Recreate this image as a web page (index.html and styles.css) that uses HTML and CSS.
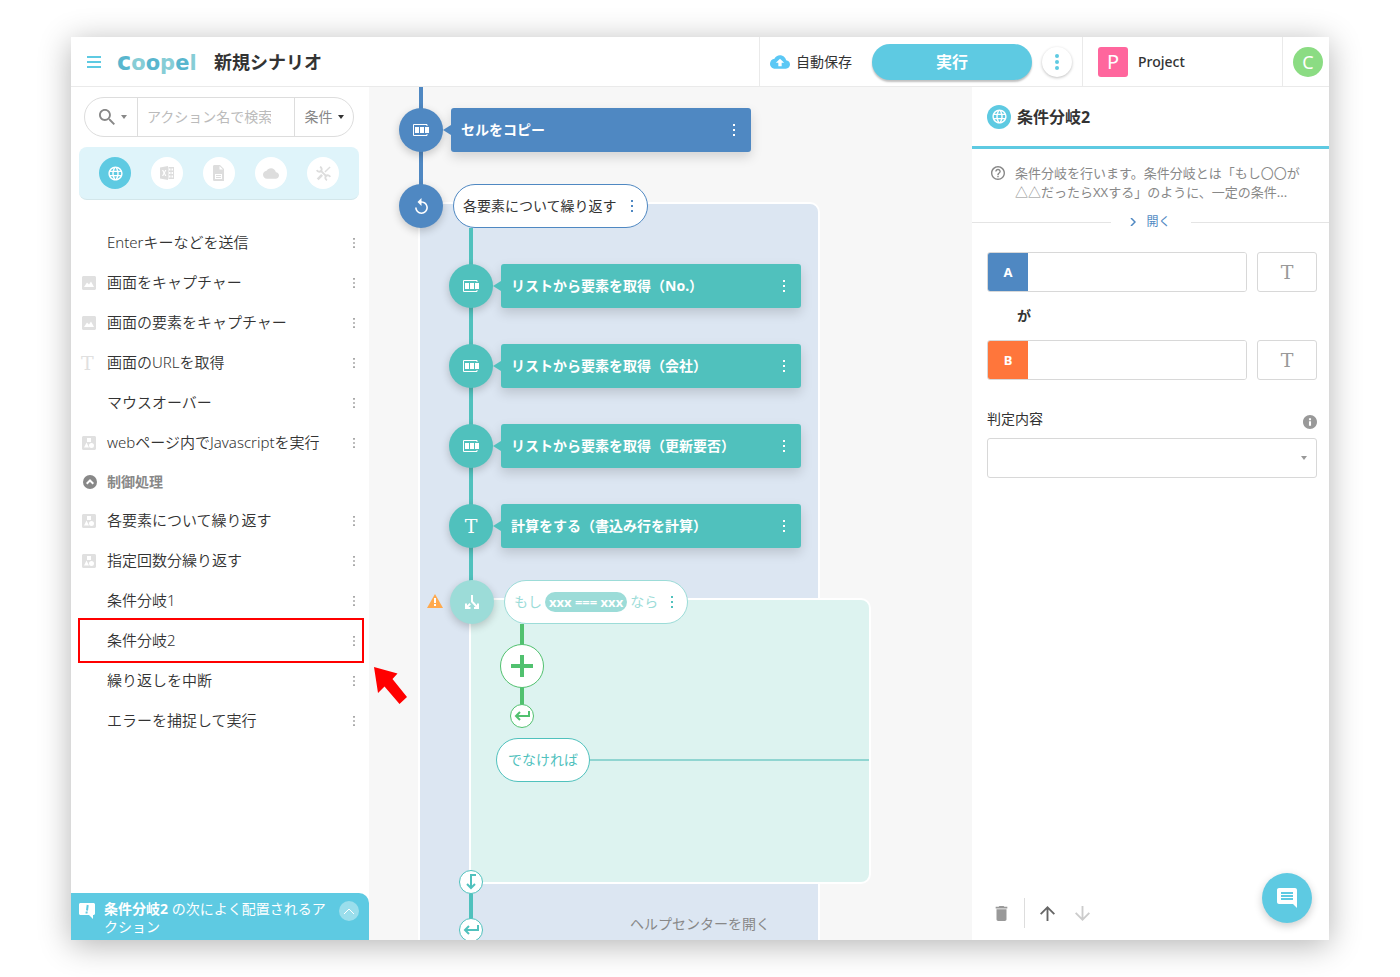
FILE: index.html
```html
<!DOCTYPE html>
<html lang="ja">
<head>
<meta charset="utf-8">
<meta name="viewport" content="width=device-width, initial-scale=1">
<title>新規シナリオ - coopel</title>
<link rel="stylesheet" href="styles.css">
</head>
<body>
<svg class="sprite" aria-hidden="true">
  <symbol id="globe" viewBox="0 0 24 24"><path d="M11.99 2C6.47 2 2 6.48 2 12s4.47 10 9.99 10C17.52 22 22 17.52 22 12S17.52 2 11.99 2zm6.93 6h-2.95c-.32-1.25-.78-2.45-1.38-3.56 1.84.63 3.37 1.91 4.33 3.56zM12 4.04c.83 1.2 1.48 2.53 1.91 3.96h-3.82c.43-1.43 1.08-2.76 1.91-3.96zM4.26 14C4.1 13.36 4 12.69 4 12s.1-1.36.26-2h3.38c-.08.66-.14 1.32-.14 2 0 .68.06 1.34.14 2H4.26zm.82 2h2.95c.32 1.25.78 2.45 1.38 3.56-1.84-.63-3.37-1.9-4.33-3.56zm2.95-8H5.08c.96-1.66 2.49-2.93 4.33-3.56C8.81 5.55 8.35 6.75 8.03 8zM12 19.96c-.83-1.2-1.48-2.53-1.91-3.96h3.82c-.43 1.43-1.08 2.76-1.91 3.96zM14.34 14H9.66c-.09-.66-.16-1.32-.16-2 0-.68.07-1.35.16-2h4.68c.09.65.16 1.32.16 2 0 .68-.07 1.34-.16 2zm.25 5.56c.6-1.11 1.06-2.31 1.38-3.56h2.95c-.96 1.65-2.49 2.93-4.33 3.56zM16.36 14c.08-.66.14-1.32.14-2 0-.68-.06-1.34-.14-2h3.38c.16.64.26 1.31.26 2s-.1 1.36-.26 2h-3.38z"/></symbol>
  <symbol id="search" viewBox="3 3 17.5 17.5"><path d="M15.5 14h-.79l-.28-.27C15.41 12.59 16 11.11 16 9.5 16 5.91 13.09 3 9.5 3S3 5.91 3 9.5 5.91 16 9.5 16c1.61 0 3.09-.59 4.23-1.57l.27.28v.79l5 4.99L20.49 19l-4.99-5zm-6 0C7.01 14 5 11.99 5 9.5S7.01 5 9.5 5 14 7.01 14 9.5 11.99 14 9.5 14z"/></symbol>
  <symbol id="excel" viewBox="0 0 16 16"><path fill-rule="evenodd" d="M1 2.500L9 1v14L1 13.500zM3 5l1.500 3L3 11h1.300L5.200 9l.9 2h1.300L5.900 8l1.500-3H6.100l-.9 2-.9-2z"/><path fill-rule="evenodd" d="M9.500 2H15v12H9.500zM10 3.500v2h1.500v-2zm2.500 0v2H14v-2zM10 7v2h1.500V7zm2.500 0v2H14V7zM10 10.500v2h1.500v-2zm2.500 0v2H14v-2z"/></symbol>
  <symbol id="file" viewBox="0 0 12 16"><path fill-rule="evenodd" d="M1.500 0H7l4 4v12H1.500C.7 16 0 15.500 0 14.500v-13C0 .700.500 0 1.500 0zM6.500 1v3.500H10zM2 9v5h7V9zM3 10h5v1H3zm0 2h5v1H3z"/></symbol>
  <symbol id="cloud" viewBox="0 4 24 16"><path d="M19.350 10.040C18.670 6.590 15.640 4 12 4 9.110 4 6.600 5.640 5.350 8.040 2.340 8.360 0 10.910 0 14c0 3.310 2.690 6 6 6h13c2.760 0 5-2.240 5-5 0-2.640-2.050-4.780-4.650-4.960z"/></symbol>
  <symbol id="tools" viewBox="0 0 16 16"><g fill="none" stroke="currentColor"><path stroke-width="2" d="M5 5l6.500 6.500M4.200 1A2.600 2.600 0 1 1 1 4.200M11.800 15A2.600 2.600 0 1 1 15 11.800"/><path stroke-width="1.500" d="M15 1L9.500 6.500"/><path stroke-width="2.800" d="M6.500 9.500L1.800 14.200"/></g></symbol>
  <symbol id="picture" viewBox="0 0 14 14"><path fill-rule="evenodd" d="M1.500 0h11C13.300 0 14 .700 14 1.500v11c0 .8-.7 1.500-1.500 1.500h-11C.7 14 0 13.300 0 12.500v-11C0 .700.700 0 1.500 0zM2 11h10L9 5.500l-2 3-2-2z"/></symbol>
  <symbol id="shapes" viewBox="0 0 14 14"><path fill-rule="evenodd" d="M1.500 0h11C13.300 0 14 .700 14 1.500v11c0 .8-.7 1.500-1.500 1.500h-11C.7 14 0 13.300 0 12.500v-11C0 .700.700 0 1.500 0zM5 2v4h4V2zM4.500 6.500L2 11.500h5zM9.500 7a2.500 2.500 0 100 5 2.500 2.500 0 000-5z"/></symbol>
  <symbol id="collapse" viewBox="0 0 14 14"><circle cx="7" cy="7" r="7"/><path fill="none" stroke="#fff" stroke-width="2" d="M3.700 8.700L7 5.500l3.300 3.200"/></symbol>
  <symbol id="dots" viewBox="0 0 2 12"><path d="M0 0h2v2H0zM0 5h2v2H0zM0 10h2v2H0z"/></symbol>
  <symbol id="caret" viewBox="0 0 6 4"><path d="M0 0h6L3 4z"/></symbol>
  <symbol id="cells" viewBox="0 0 16 12"><path fill="none" stroke="currentColor" d="M14 2V.5H.5v11H14V10"/><path d="M2 3h4v6H2zM7 3h4v6H7zM12 3h4v6h-4z"/></symbol>
  <symbol id="replay" viewBox="4 1 16 20"><path d="M12 5V1L7 6l5 5V7c3.310 0 6 2.690 6 6s-2.690 6-6 6-6-2.690-6-6H4c0 4.420 3.580 8 8 8s8-3.580 8-8-3.580-8-8-8z"/></symbol>
  <symbol id="branch" viewBox="0 0 14 14"><path fill="none" stroke="currentColor" stroke-width="2" d="M7 0v6.500l5 5.500M5.200 8.800L2 12M1 8.500V13h4.500M9 13h4V8.500"/></symbol>
  <symbol id="return" viewBox="0 0 16 10"><path fill="none" stroke="currentColor" stroke-width="2" d="M15 0v5H2M6 1L2 5l4 4"/></symbol>
  <symbol id="down" viewBox="0 0 10 16"><path fill="none" stroke="currentColor" stroke-width="2" d="M10 1H5v13M1 10l4 4 4-4"/></symbol>
  <symbol id="help" viewBox="2 2 20 20"><path d="M11 18h2v-2h-2v2zm1-16C6.480 2 2 6.480 2 12s4.480 10 10 10 10-4.480 10-10S17.520 2 12 2zm0 18c-4.410 0-8-3.590-8-8s3.590-8 8-8 8 3.590 8 8-3.590 8-8 8zm0-14c-2.210 0-4 1.790-4 4h2c0-1.100.9-2 2-2s2 .9 2 2c0 2-3 1.750-3 5h2c0-2.250 3-2.500 3-5 0-2.210-1.790-4-4-4z"/></symbol>
  <symbol id="info" viewBox="2 2 20 20"><path fill-rule="evenodd" d="M12 2C6.480 2 2 6.480 2 12s4.480 10 10 10 10-4.480 10-10S17.520 2 12 2zm1.500 15.500h-3V11h3v6.500zm0-8h-3v-3h3v3z"/></symbol>
  <symbol id="trash" viewBox="5 3 14 18"><path d="M6 19c0 1.100.9 2 2 2h8c1.100 0 2-.9 2-2V7H6v12zM19 4h-3.500l-1-1h-5l-1 1H5v2h14V4z"/></symbol>
  <symbol id="up" viewBox="4 4 16 16"><path d="M4 12l1.410 1.410L11 7.830V20h2V7.830l5.580 5.590L20 12l-8-8-8 8z"/></symbol>
  <symbol id="comment" viewBox="2 2 20 20"><path d="M21.990 4c0-1.100-.89-2-1.990-2H4c-1.100 0-2 .9-2 2v12c0 1.100.9 2 2 2h14l4 4-.01-18zM18 14H6v-2h12v2zm0-3H6V9h12v2zm0-3H6V6h12v2z"/></symbol>
</svg>

<div class="app">
  <header class="topbar">
    <button class="menu" aria-label="メニュー"><svg viewBox="0 0 14 12"><path d="M0 0h14v2H0zM0 5h14v2H0zM0 10h14v2H0z"/></svg></button>
    <a class="logo" href="#" aria-label="coopel"><span class="initial">c</span><span class="pale raised">o</span><span>o</span><span class="pale">p</span><span>e</span><span class="pale">l</span></a>
    <h1 class="title">新規シナリオ</h1>
    <div class="run-area">
      <span class="saved"><svg viewBox="0 4 24 16"><path fill-rule="evenodd" d="M19.350 10.040C18.670 6.590 15.640 4 12 4 9.110 4 6.600 5.640 5.350 8.040 2.340 8.360 0 10.910 0 14c0 3.310 2.690 6 6 6h13c2.760 0 5-2.240 5-5 0-2.640-2.050-4.780-4.650-4.960zM14 13v4h-4v-4H7l5-5 5 5h-3z"/></svg>自動保存</span>
      <button class="run">実行</button>
      <button class="more" aria-label="その他"><svg viewBox="0 0 4 16"><circle cx="2" cy="2" r="2"/><circle cx="2" cy="8" r="2"/><circle cx="2" cy="14" r="2"/></svg></button>
    </div>
    <a class="project" href="#"><span class="project-mark">P</span>Project</a>
    <div class="account"><button class="avatar">C</button></div>
  </header>

  <div class="body">
    <aside class="sidebar">
      <div class="search">
        <button class="search-kind" aria-label="検索の種類"><svg class="ic-search"><use href="#search"/></svg><svg class="ic-caret"><use href="#caret"/></svg></button>
        <input class="search-text" type="search" placeholder="アクション名で検索" aria-label="アクション名で検索">
        <button class="search-filter">条件<svg class="ic-caret"><use href="#caret"/></svg></button>
      </div>
      <nav class="kinds" aria-label="カテゴリ">
        <button class="kind active" aria-label="ブラウザ"><svg class="ic-globe"><use href="#globe"/></svg></button>
        <button class="kind" aria-label="Excel"><svg class="ic16"><use href="#excel"/></svg></button>
        <button class="kind" aria-label="ファイル"><svg class="ic-file"><use href="#file"/></svg></button>
        <button class="kind" aria-label="クラウド"><svg class="ic-cloud"><use href="#cloud"/></svg></button>
        <button class="kind" aria-label="ツール"><svg class="ic-tools"><use href="#tools"/></svg></button>
      </nav>
      <ul class="actions">
        <li class="action"><span class="type"></span><span class="name">Enterキーなどを送信</span><button class="dots" aria-label="メニュー"><svg><use href="#dots"/></svg></button></li>
        <li class="action"><span class="type"><svg><use href="#picture"/></svg></span><span class="name">画面をキャプチャー</span><button class="dots" aria-label="メニュー"><svg><use href="#dots"/></svg></button></li>
        <li class="action"><span class="type"><svg><use href="#picture"/></svg></span><span class="name">画面の要素をキャプチャー</span><button class="dots" aria-label="メニュー"><svg><use href="#dots"/></svg></button></li>
        <li class="action"><span class="type letter">T</span><span class="name">画面のURLを取得</span><button class="dots" aria-label="メニュー"><svg><use href="#dots"/></svg></button></li>
        <li class="action"><span class="type"></span><span class="name">マウスオーバー</span><button class="dots" aria-label="メニュー"><svg><use href="#dots"/></svg></button></li>
        <li class="action"><span class="type"><svg><use href="#shapes"/></svg></span><span class="name">webページ内でJavascriptを実行</span><button class="dots" aria-label="メニュー"><svg><use href="#dots"/></svg></button></li>
        <li class="group"><button class="group-toggle"><svg><use href="#collapse"/></svg>制御処理</button></li>
        <li class="action"><span class="type"><svg><use href="#shapes"/></svg></span><span class="name">各要素について繰り返す</span><button class="dots" aria-label="メニュー"><svg><use href="#dots"/></svg></button></li>
        <li class="action"><span class="type"><svg><use href="#shapes"/></svg></span><span class="name">指定回数分繰り返す</span><button class="dots" aria-label="メニュー"><svg><use href="#dots"/></svg></button></li>
        <li class="action"><span class="type"></span><span class="name">条件分岐1</span><button class="dots" aria-label="メニュー"><svg><use href="#dots"/></svg></button></li>
        <li class="action marked"><span class="type"></span><span class="name">条件分岐2</span><button class="dots" aria-label="メニュー"><svg><use href="#dots"/></svg></button><svg class="pointer" viewBox="0 0 34 38"><path d="M0 0l23.500 6.500-5 5.500L33 30l-7.500 7-15-17.500L4 26z"/></svg></li>
        <li class="action"><span class="type"></span><span class="name">繰り返しを中断</span><button class="dots" aria-label="メニュー"><svg><use href="#dots"/></svg></button></li>
        <li class="action"><span class="type"></span><span class="name">エラーを捕捉して実行</span><button class="dots" aria-label="メニュー"><svg><use href="#dots"/></svg></button></li>
      </ul>
      <div class="suggest">
        <svg class="ic-suggest" viewBox="0 0 16 16"><path fill="#fff" d="M1.500 0h13C15.300 0 16 .700 16 1.500v9c0 .8-.7 1.500-1.500 1.500H14v4l-4-4H1.500C.7 12 0 11.300 0 10.500v-9C0 .700.700 0 1.500 0z"/><path stroke="#5ecae2" stroke-width="2" d="M8.700 2L8 7.500M7.700 8.500l-.2 2"/></svg>
        <p class="suggest-text"><b>条件分岐2</b> の次によく配置されるアクション</p>
        <button class="suggest-open" aria-label="開く"><svg viewBox="0 0 12 7"><path d="M1 6l5-5 5 5"/></svg></button>
      </div>
    </aside>

    <main class="canvas">
      <div class="scope scope-loop"></div>
      <div class="scope scope-if"></div>
      <div class="wire wire-root"></div>
      <div class="wire wire-loop"></div>
      <div class="wire wire-if"></div>
      <div class="wire wire-end"></div>
      <div class="wire wire-else"></div>

      <div class="node node-copy blue"><span class="knob"><svg class="ic-cells"><use href="#cells"/></svg></span><div class="card">セルをコピー<button class="dots" aria-label="メニュー"><svg><use href="#dots"/></svg></button></div></div>
      <div class="node node-loop blue"><span class="knob"><svg class="ic-replay"><use href="#replay"/></svg></span><div class="pill">各要素について繰り返す<button class="dots" aria-label="メニュー"><svg><use href="#dots"/></svg></button></div></div>
      <div class="node node-no teal"><span class="knob"><svg class="ic-cells"><use href="#cells"/></svg></span><div class="card">リストから要素を取得（No.）<button class="dots" aria-label="メニュー"><svg><use href="#dots"/></svg></button></div></div>
      <div class="node node-company teal"><span class="knob"><svg class="ic-cells"><use href="#cells"/></svg></span><div class="card">リストから要素を取得（会社）<button class="dots" aria-label="メニュー"><svg><use href="#dots"/></svg></button></div></div>
      <div class="node node-update teal"><span class="knob"><svg class="ic-cells"><use href="#cells"/></svg></span><div class="card">リストから要素を取得（更新要否）<button class="dots" aria-label="メニュー"><svg><use href="#dots"/></svg></button></div></div>
      <div class="node node-calc teal"><span class="knob letter">T</span><div class="card">計算をする（書込み行を計算）<button class="dots" aria-label="メニュー"><svg><use href="#dots"/></svg></button></div></div>
      <svg class="warning" viewBox="0 0 16 14"><path fill="#ffa94d" d="M8 0l8 14H0z"/><path fill="#fff" d="M7 4h2v5H7zM7 10h2v2H7z"/></svg>
      <div class="node node-if mint"><span class="knob"><svg class="ic-branch"><use href="#branch"/></svg></span><div class="pill">もし<span class="expr">xxx === xxx</span>なら<button class="dots" aria-label="メニュー"><svg><use href="#dots"/></svg></button></div></div>
      <button class="add" aria-label="追加"><svg viewBox="0 0 22 22"><path d="M9 0h4v9h9v4h-9v9H9v-9H0V9h9z"/></svg></button>
      <span class="stop stop-if"><svg class="ic-return"><use href="#return"/></svg></span>
      <div class="else">でなければ</div>
      <span class="stop stop-next"><svg class="ic-down"><use href="#down"/></svg></span>
      <span class="stop stop-loop"><svg class="ic-return"><use href="#return"/></svg></span>
      <a class="help-link" href="#">ヘルプセンターを開く</a>
    </main>

    <section class="panel">
      <header class="panel-head"><span class="panel-icon"><svg class="ic-globe"><use href="#globe"/></svg></span><h2>条件分岐2</h2></header>
      <div class="about"><svg class="ic-help"><use href="#help"/></svg><p>条件分岐を行います。条件分岐とは「もし〇〇が△△だったらXXする」のように、一定の条件...</p></div>
      <div class="unfold"><button class="unfold-button"><svg viewBox="0 0 6 8"><path d="M1 0l4 4-4 4"/></svg>開く</button></div>
      <form class="form">
        <div class="operand"><div class="field"><label class="tag tag-a" for="value-a">A</label><input id="value-a" type="text"></div><button type="button" class="text-type letter">T</button></div>
        <p class="particle">が</p>
        <div class="operand"><div class="field"><label class="tag tag-b" for="value-b">B</label><input id="value-b" type="text"></div><button type="button" class="text-type letter">T</button></div>
        <div class="judge-head"><label for="judge">判定内容</label><svg class="ic-info"><use href="#info"/></svg></div>
        <div class="judge"><select id="judge"><option></option></select><svg class="ic-caret"><use href="#caret"/></svg></div>
      </form>
      <footer class="tools">
        <button class="tool tool-delete" aria-label="削除"><svg><use href="#trash"/></svg></button>
        <button class="tool tool-up" aria-label="上へ"><svg><use href="#up"/></svg></button>
        <button class="tool tool-down" aria-label="下へ"><svg><use href="#up"/></svg></button>
      </footer>
      <button class="chat" aria-label="チャット"><svg><use href="#comment"/></svg></button>
    </section>
  </div>
</div>
</body>
</html>
```

FILE: styles.css
```css
:root {
  --aqua: #5ecae2;
  --blue: #4f88c2;
  --teal: #50c1bd;
  --mint: #9cdcd8;
  --green: #51c16f;
  --ink: #333;
  --gray: #999;
  --line: #ddd;
}

* { box-sizing: border-box; }

body {
  display: flex;
  flex-direction: column;
  min-height: 100vh;
  margin: 0;
  padding: 37px 71px;
  overflow-x: hidden;
  background: #fff;
  color: var(--ink);
  font: 14px/20px "Noto Sans", "Noto Sans CJK JP", sans-serif;
}

h1, h2, p, ul { margin: 0; padding: 0; }
ul { list-style: none; }
a { color: inherit; text-decoration: none; }
svg { display: block; flex: none; fill: currentColor; }

button, input, select { font: inherit; color: inherit; }

button {
  display: flex;
  align-items: center;
  justify-content: center;
  padding: 0;
  border: 0;
  background: none;
  cursor: pointer;
}

.sprite { position: absolute; width: 0; height: 0; }

.app {
  display: flex;
  flex: 1;
  flex-direction: column;
  box-shadow: 0 5px 30px rgba(0, 0, 0, .3);
}

/* Top bar */
.topbar {
  display: flex;
  align-items: stretch;
  height: 50px;
  border-bottom: 1px solid #eaeaea;
  background: #fff;
}

.menu { width: 46px; color: var(--aqua); }
.menu svg { width: 14px; height: 12px; }

.logo {
  display: flex;
  align-items: baseline;
  width: 96px;
  color: #59b6ce;
  font: 700 21px/50px "DejaVu Sans", sans-serif;
}
.logo .pale { color: #86cdd6; }
.logo .initial { font-size: 24px; }
.logo .raised { padding-bottom: 2px; line-height: 46px; }

.title { margin-left: 1px; font-size: 18px; line-height: 50px; font-weight: 700; }

.run-area {
  display: flex;
  align-items: center;
  gap: 10px;
  width: 323px;
  margin-left: auto;
  padding: 0 10px;
  border-left: 1px solid #eaeaea;
}

.saved { display: flex; align-items: center; gap: 6px; margin-right: 10px; }
.saved svg { width: 20px; height: 14px; color: #5bc8f5; }

.run {
  flex: 1;
  height: 36px;
  border-radius: 18px;
  background: var(--aqua);
  box-shadow: 0 2px 2px rgba(0, 0, 0, .25);
  color: #fff;
  font-size: 16px;
  font-weight: 700;
}

.more {
  width: 30px;
  height: 30px;
  border-radius: 50%;
  box-shadow: 0 1px 3px rgba(0, 0, 0, .25);
  color: var(--aqua);
}
.more svg { width: 4px; height: 16px; }

.project {
  display: flex;
  align-items: center;
  gap: 10px;
  width: 200px;
  padding-left: 15px;
  border-left: 1px solid #eaeaea;
  font-weight: 500;
}
.project-mark {
  width: 30px;
  border-radius: 3px;
  background: #ff669d;
  color: #fff;
  font-size: 20px;
  font-weight: 400;
  line-height: 30px;
  text-align: center;
}

.account { display: flex; align-items: center; width: 47px; padding-left: 10px; border-left: 1px solid #eaeaea; }
.avatar { width: 30px; height: 30px; border-radius: 50%; background: #8bdc83; color: #fff; font-size: 18px; }

.body { display: flex; flex: 1; }

/* Action list */
.sidebar {
  position: relative;
  z-index: 1;
  display: flex;
  flex: none;
  flex-direction: column;
  width: 298px;
  background: #fff;
}

.search {
  display: flex;
  height: 40px;
  margin: 10px 15px 0 13px;
  border: 1px solid var(--line);
  border-radius: 20px;
  color: #888;
}
.ic-search { width: 16px; height: 16px; }
.ic-caret { width: 6px; height: 4px; }
.search-kind { gap: 6px; width: 53px; padding-left: 3px; border-right: 1px solid var(--line); }
.search-text { flex: 1; min-width: 0; padding: 0 9px; border: 0; outline: 0; background: none; }
.search-text::placeholder { color: #bbb; opacity: 1; }
.search-filter { gap: 5px; width: 59px; border-left: 1px solid var(--line); }
.search-filter .ic-caret { color: #333; }

.kinds {
  display: flex;
  align-items: center;
  justify-content: space-between;
  height: 53px;
  margin: 10px 10px 0 8px;
  padding: 0 20px;
  border-bottom: 1px solid #d3e6ea;
  border-radius: 8px;
  background: #dff4fa;
}
.kind { width: 32px; height: 32px; border-radius: 50%; background: #fff; color: #ddd; }
.kind.active { background: var(--aqua); color: #fff; }
.ic-globe { width: 17px; height: 17px; }
.ic16 { width: 16px; height: 16px; }
.ic-file { width: 12px; height: 16px; }
.ic-cloud { width: 16px; height: 11px; }
.ic-tools { width: 15px; height: 15px; }

.actions { margin-top: 23px; font-size: 15px; }
.action { position: relative; display: flex; align-items: center; height: 40px; padding: 0 10px; }
.type { width: 26px; color: #e0e0e0; }
.type svg { width: 14px; height: 14px; margin-left: 1px; }
.letter { font-family: "DejaVu Serif", serif; font-size: 19px; }
.name { flex: 1; padding-bottom: 2px; font-weight: 350; }
.dots { width: 10px; height: 24px; color: var(--gray); }
.dots svg { width: 2px; height: 12px; }
.action .dots svg { height: 10px; }

.group { height: 38px; padding-left: 12px; }
.group-toggle { gap: 10px; height: 38px; color: #888; font-size: 14px; font-weight: 700; }
.group-toggle svg { width: 14px; height: 14px; }

/* Callout frame and arrow over the chosen action */
.marked::after {
  position: absolute;
  inset: -3px 5px -2px 7px;
  border: 2px solid #f00;
  content: "";
  pointer-events: none;
}
.pointer { position: absolute; top: 46px; left: 303px; width: 34px; height: 38px; color: #f00; }

.suggest {
  display: flex;
  align-items: flex-start;
  gap: 9px;
  margin-top: auto;
  padding: 7px 10px 4px 8px;
  border-radius: 0 10px 0 0;
  background: var(--aqua);
  color: #fff;
}
.suggest-text { flex: 1; line-height: 18px; }
.ic-suggest { width: 16px; height: 16px; margin-top: 3px; }
.suggest-open { width: 20px; height: 20px; margin-top: 1px; border-radius: 50%; background: #9bdeec; }
.suggest-open svg { width: 12px; height: 7px; fill: none; stroke: #fff; }

/* Flow canvas: nodes sit at their place on the board */
.canvas { position: relative; flex: 1; min-width: 0; overflow: hidden; background: #f7f7f7; }

.scope { position: absolute; border: 2px solid #fff; border-radius: 10px; }
.scope-loop { top: 115px; bottom: -20px; left: 49px; width: 402px; background: #dce6f2; }
.scope-if { top: 511px; left: 100px; width: 402px; height: 286px; background: #ddf3f0; }

.wire { position: absolute; width: 4px; }
.wire-root { top: 0; left: 50px; height: 119px; background: var(--blue); }
.wire-loop { top: 141px; left: 100px; height: 374px; background: var(--teal); }
.wire-if { top: 537px; left: 151px; height: 92px; background: var(--green); }
.wire-end { top: 795px; left: 100px; height: 48px; background: var(--teal); }
.wire-else { top: 672px; left: 221px; width: 279px; height: 2px; background: #90d5d1; }

.node { position: absolute; display: flex; align-items: center; gap: 8px; color: #fff; }
.node-copy { top: 21px; left: 30px; }
.node-loop { top: 97px; left: 30px; }
.node-no { top: 177px; left: 80px; }
.node-company { top: 257px; left: 80px; }
.node-update { top: 337px; left: 80px; }
.node-calc { top: 417px; left: 80px; }
.node-if { top: 493px; left: 81px; }

.blue { --tone: var(--blue); }
.teal { --tone: var(--teal); }
.mint { --tone: var(--mint); }

.knob {
  display: flex;
  align-items: center;
  justify-content: center;
  width: 44px;
  height: 44px;
  border-radius: 50%;
  background: var(--tone);
  box-shadow: 0 3px 8px rgba(0, 0, 0, .2);
}
.ic-cells { width: 16px; height: 12px; }
.ic-replay { width: 13px; height: 16px; }
.ic-branch { width: 14px; height: 14px; }

.card {
  position: relative;
  display: flex;
  align-items: center;
  justify-content: space-between;
  width: 300px;
  height: 44px;
  padding: 0 12px 0 10px;
  border-radius: 3px;
  background: var(--tone);
  box-shadow: 0 5px 12px rgba(0, 0, 0, .15);
  font-weight: 700;
}
.card::before {
  position: absolute;
  top: 17px;
  left: -8px;
  border: solid transparent;
  border-width: 5px 8px 5px 0;
  border-right-color: var(--tone);
  content: "";
}
.card .dots { color: #fff; }

.pill {
  display: flex;
  align-items: center;
  gap: 10px;
  height: 44px;
  margin-left: 2px;
  padding: 0 10px 0 9px;
  border: 1px solid var(--tone);
  border-radius: 22px;
  background: #fff;
  color: var(--ink);
}
.pill .dots { color: var(--tone); }
.mint .pill { gap: 3px; color: var(--mint); }
.mint .dots { margin-left: 6px; color: var(--teal); }
.expr { padding: 0 4px; border-radius: 10px; background: var(--mint); color: #fff; font-size: 13px; font-weight: 700; }

.warning { position: absolute; top: 507px; left: 58px; width: 16px; height: 14px; }

.add {
  position: absolute;
  top: 557px;
  left: 131px;
  width: 44px;
  height: 44px;
  border: 1px solid var(--green);
  border-radius: 50%;
  background: #fff;
  color: var(--green);
}
.add svg { width: 22px; height: 22px; }

.stop {
  position: absolute;
  display: flex;
  align-items: center;
  justify-content: center;
  width: 24px;
  height: 24px;
  border: 1px solid;
  border-radius: 50%;
  background: #fff;
  color: var(--teal);
}
.stop-if { top: 617px; left: 141px; color: var(--green); }
.stop-next { top: 783px; left: 90px; }
.stop-loop { top: 831px; left: 90px; }
.ic-return { width: 16px; height: 10px; }
.ic-down { width: 10px; height: 16px; }

.else {
  position: absolute;
  top: 651px;
  left: 127px;
  width: 94px;
  border: 1px solid var(--teal);
  border-radius: 22px;
  background: #fff;
  color: var(--teal);
  line-height: 42px;
  text-align: center;
}

.help-link { position: absolute; top: 827px; left: 261px; color: #888; }

/* Settings panel */
.panel { position: relative; display: flex; flex: none; flex-direction: column; width: 357px; background: #fff; }
.panel-head {
  display: flex;
  align-items: center;
  gap: 6px;
  height: 62px;
  padding-left: 15px;
  border-bottom: 3px solid var(--aqua);
}
.panel-head h2 { font-size: 16px; font-weight: 700; }
.panel-icon { display: flex; align-items: center; justify-content: center; width: 24px; height: 24px; border-radius: 50%; background: var(--aqua); color: #fff; }

.about { display: flex; gap: 10px; padding: 15px 23px 0 19px; color: #888; font-size: 13px; line-height: 19px; }
.ic-help { width: 14px; height: 14px; margin-top: 2px; }

.unfold { display: flex; align-items: center; margin-top: 10px; color: var(--blue); font-size: 12px; }
.unfold::before, .unfold::after { flex: 1; height: 1px; background: #e4e4e4; content: ""; }
.unfold-button { gap: 10px; width: 80px; }
.unfold-button svg { width: 6px; height: 8px; fill: none; stroke: currentColor; stroke-width: 1.5; }

.form { padding: 20px 12px 0 15px; }
.operand { display: flex; gap: 10px; }
.field { display: flex; flex: 1; height: 40px; border: 1px solid #d8d8d8; border-radius: 3px; overflow: hidden; }
.field input { flex: 1; min-width: 0; border: 0; outline: 0; }
.tag { width: 40px; color: #fff; font-size: 13px; font-weight: 700; line-height: 38px; text-align: center; }
.tag-a { background: var(--blue); }
.tag-b { background: #ff763b; }
.text-type { width: 60px; height: 40px; border: 1px solid #d8d8d8; border-radius: 3px; color: var(--gray); }
.particle { padding-left: 30px; font-weight: 700; line-height: 48px; }

.judge-head { display: flex; align-items: center; justify-content: space-between; margin-top: 29px; }
.ic-info { width: 14px; height: 14px; margin-top: 5px; color: var(--gray); }
.judge { position: relative; margin-top: 9px; }
.judge select { width: 100%; height: 40px; border: 1px solid #d8d8d8; border-radius: 3px; background: #fff; appearance: none; }
.judge .ic-caret { position: absolute; top: 18px; right: 10px; color: var(--gray); pointer-events: none; }

.tools { display: flex; align-items: center; margin-top: auto; padding: 0 17px 12px; }
.tool { width: 36px; height: 30px; color: #666; }
.tool svg { width: 15px; height: 15px; }
.tool-delete { padding-right: 10px; border-right: 1px solid var(--line); color: var(--gray); }
.tool-up { width: 45px; }
.tool-down { width: 25px; color: #ccc; }
.tool-down svg { transform: rotate(180deg); }

.chat {
  position: absolute;
  right: 17px;
  bottom: 17px;
  width: 50px;
  height: 50px;
  border-radius: 50%;
  background: var(--aqua);
  box-shadow: 0 3px 8px rgba(0, 0, 0, .2);
  color: #fff;
}
.chat svg { width: 20px; height: 20px; }
```
